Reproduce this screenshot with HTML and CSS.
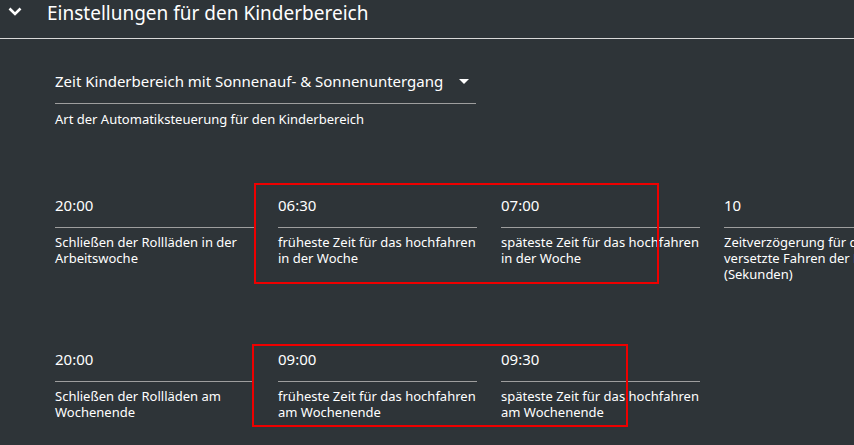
FILE: index.html
```html
<!DOCTYPE html>
<html lang="de">
<head>
  <meta charset="UTF-8" />
  <meta name="viewport" content="width=device-width, initial-scale=1.0" />
  <title>Einstellungen für den Kinderbereich</title>
  <link rel="stylesheet" href="styles.css">
</head>
<body>
  <div class="panel">
    <div class="panel-header">
      <svg class="chevron" width="14" height="9" viewBox="0 0 14 9">
        <path d="M1.5 1.5 L7 7 L12.5 1.5" fill="none" stroke="#fff" stroke-width="2.6" />
      </svg>
      <span class="panel-title">Einstellungen für den Kinderbereich</span>
    </div>

    <div class="panel-body">
      <div class="select-field">
        <div class="select-value">
          <span>Zeit Kinderbereich mit Sonnenauf- &amp; Sonnenuntergang</span>
          <span class="caret"></span>
        </div>
        <div class="field-label">Art der Automatiksteuerung für den Kinderbereich</div>
      </div>

      <div class="fields">
        <div class="field">
          <div class="field-value">20:00</div>
          <div class="field-label">Schließen der Rollläden in der Arbeitswoche</div>
        </div>
        <div class="field">
          <div class="field-value">06:30</div>
          <div class="field-label">früheste Zeit für das hochfahren in der Woche</div>
        </div>
        <div class="field">
          <div class="field-value">07:00</div>
          <div class="field-label">späteste Zeit für das hochfahren in der Woche</div>
        </div>
        <div class="field">
          <div class="field-value">10</div>
          <div class="field-label">Zeitverzögerung für das versetzte Fahren der Rollläden (Sekunden)</div>
        </div>
        <div class="field">
          <div class="field-value">20:00</div>
          <div class="field-label">Schließen der Rollläden am Wochenende</div>
        </div>
        <div class="field">
          <div class="field-value">09:00</div>
          <div class="field-label">früheste Zeit für das hochfahren am Wochenende</div>
        </div>
        <div class="field">
          <div class="field-value">09:30</div>
          <div class="field-label">späteste Zeit für das hochfahren am Wochenende</div>
        </div>
      </div>
    </div>
  </div>

  <!-- markierungen -->
  <div class="mark mark-week"></div>
  <div class="mark mark-weekend"></div>
</body>
</html>
```

FILE: styles.css
```css
html {
  overflow: hidden;
}
body {
  font-family: "Noto Sans", "Open Sans", sans-serif;
  background-color: #2e3438;
  color: #fff;
  margin: 0;
  overflow: hidden;
  position: relative;
  height: 445px;
}
.panel-header {
  display: flex;
  align-items: center;
  height: 26px;
  padding-bottom: 12px;
  border-bottom: 1px solid #d8d8d8;
}
.chevron {
  margin-left: 8px;
  margin-right: 25px;
  margin-top: -4px;
}
.panel-title {
  font-size: 19px;
  line-height: 26px;
}
.panel-body {
  padding: 32px 0 0 55px;
}
.select-field {
  width: 421px;
}
.select-value {
  display: flex;
  justify-content: space-between;
  align-items: center;
  font-size: 15px;
  line-height: 20px;
  padding-bottom: 12px;
  border-bottom: 1px solid #9e9e9e;
}
.caret {
  width: 0;
  height: 0;
  border-left: 5px solid transparent;
  border-right: 5px solid transparent;
  border-top: 5px solid #fff;
  margin-right: 7px;
}
.field-label {
  font-size: 13px;
  line-height: 16px;
  margin-top: 7px;
}
.fields {
  display: grid;
  grid-template-columns: repeat(4, 199px);
  grid-auto-rows: 154px;
  column-gap: 24px;
  margin-top: 68px;
}
.field-value {
  font-size: 15px;
  line-height: 20px;
  padding-bottom: 12px;
  border-bottom: 1px solid #9e9e9e;
}
.fields .field-label {
  margin-top: 6px;
}
.mark {
  position: absolute;
  border: 2px solid #ee0000;
}
.mark-week {
  left: 254px;
  top: 183px;
  width: 401px;
  height: 97px;
}
.mark-weekend {
  left: 252px;
  top: 344px;
  width: 372px;
  height: 79px;
}
```
